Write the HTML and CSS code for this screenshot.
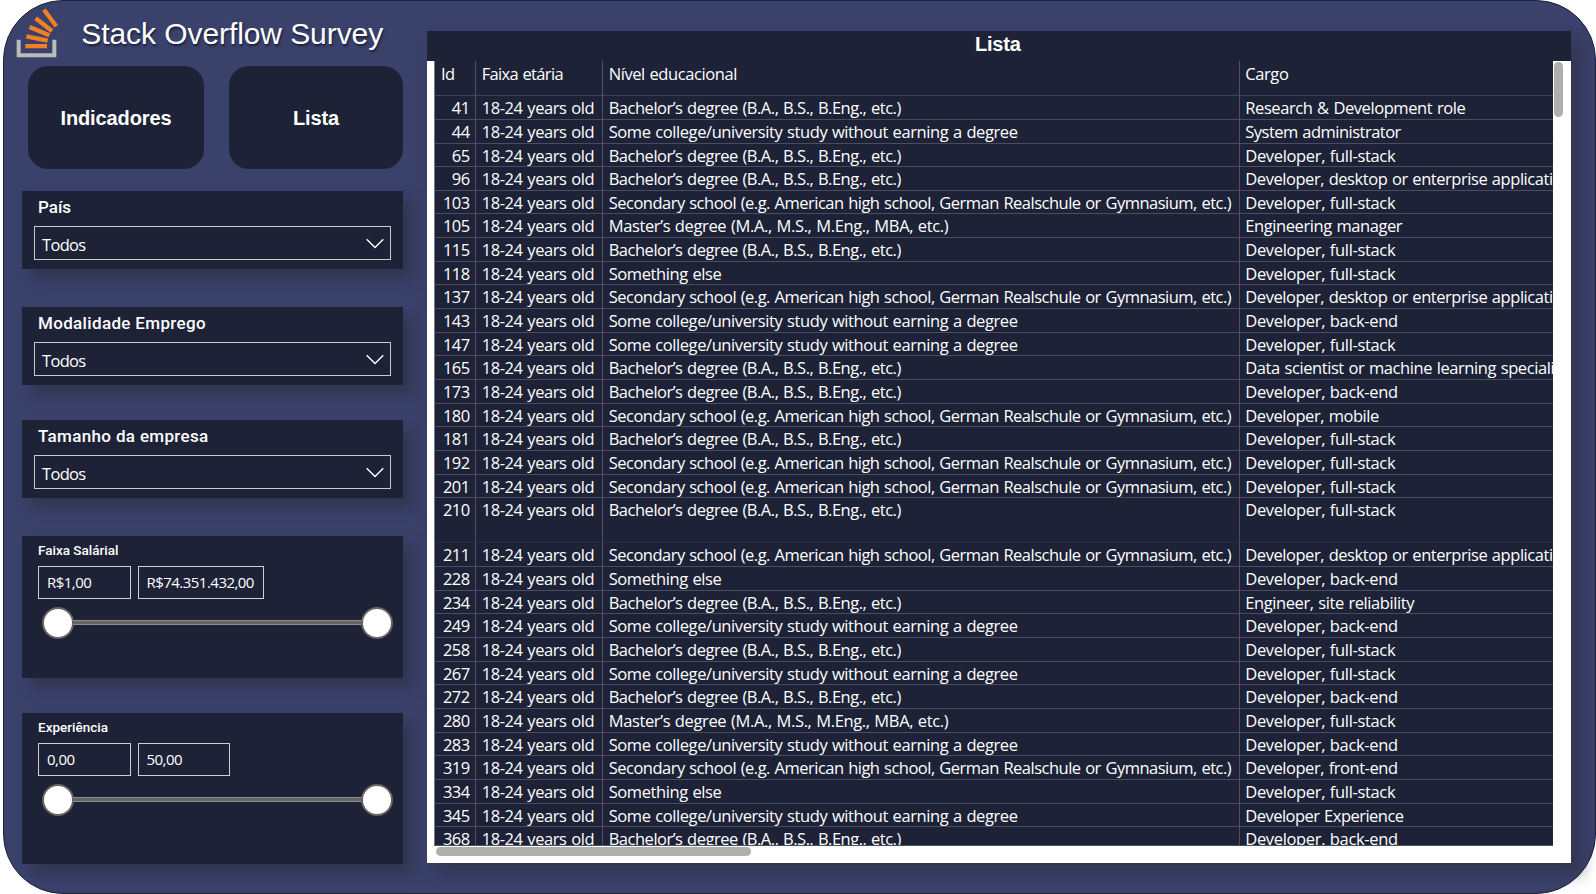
FILE: index.html
```html
<!DOCTYPE html>
<html lang="pt">
<head>
<meta charset="utf-8">
<title>Stack Overflow Survey</title>
<link rel="stylesheet" href="styles.css">
</head>
<body>
<div class="shell">
  <aside class="side">
    <header class="brand">
      <svg class="logo" viewBox="0 0 130 150" width="43.33" height="50" fill="none" stroke-width="12">
        <path stroke="#bcbbbb" d="M11 95v47h107V95"/>
        <path stroke="#f48024" stroke-width="13" d="M31 114.500h65M34 85l64 13M44 57l59 25M62 31l49 38M87 5l37 50"/>
      </svg>
      <h1>Stack Overflow Survey</h1>
    </header>
    <nav class="nav"><button class="tab first">Indicadores</button><button class="tab">Lista</button></nav>

    <section class="card pick a"><h2>País</h2><div class="select"><span>Todos</span><svg width="18" height="11" viewBox="0 0 18 11"><path d="M.7 1.200l8.300 8.300 8.300-8.300"/></svg></div></section>
    <section class="card pick b"><h2>Modalidade Emprego</h2><div class="select"><span>Todos</span><svg width="18" height="11" viewBox="0 0 18 11"><path d="M.7 1.200l8.300 8.300 8.300-8.300"/></svg></div></section>
    <section class="card pick c"><h2>Tamanho da empresa</h2><div class="select"><span>Todos</span><svg width="18" height="11" viewBox="0 0 18 11"><path d="M.7 1.200l8.300 8.300 8.300-8.300"/></svg></div></section>

    <section class="card range d"><h3>Faixa Salárial</h3>
      <div class="inputs"><div class="num">R$1,00</div><div class="num wide">R$74.351.432,00</div></div>
      <div class="slider"><i class="thumb"></i><i class="track"></i><i class="thumb"></i></div>
    </section>
    <section class="card range e"><h3>Experiência</h3>
      <div class="inputs"><div class="num">0,00</div><div class="num">50,00</div></div>
      <div class="slider"><i class="thumb"></i><i class="track"></i><i class="thumb"></i></div>
    </section>
  </aside>

  <main class="list">
    <h2 class="list-title">Lista</h2>
    <div class="list-body">
      <div class="table-col">
        <div class="table">
          <div class="row head"><b>Id</b><b class="fx">Faixa etária</b><b>Nível educacional</b><b>Cargo</b></div>
          <div class="row"><b>41</b><b>18-24 years old</b><b class="ba">Bachelor’s degree (B.A., B.S., B.Eng., etc.)</b><b>Research &amp; Development role</b></div>
          <div class="row"><b>44</b><b>18-24 years old</b><b class="so">Some college/university study without earning a degree</b><b class="sy">System administrator</b></div>
          <div class="row"><b>65</b><b>18-24 years old</b><b class="ba">Bachelor’s degree (B.A., B.S., B.Eng., etc.)</b><b class="dv">Developer, full-stack</b></div>
          <div class="row"><b>96</b><b>18-24 years old</b><b class="ba">Bachelor’s degree (B.A., B.S., B.Eng., etc.)</b><b class="dd">Developer, desktop or enterprise applications</b></div>
          <div class="row"><b>103</b><b>18-24 years old</b><b class="se">Secondary school (e.g. American high school, German Realschule or Gymnasium, etc.)</b><b class="dv">Developer, full-stack</b></div>
          <div class="row"><b>105</b><b>18-24 years old</b><b class="ma">Master’s degree (M.A., M.S., M.Eng., MBA, etc.)</b><b>Engineering manager</b></div>
          <div class="row"><b>115</b><b>18-24 years old</b><b class="ba">Bachelor’s degree (B.A., B.S., B.Eng., etc.)</b><b class="dv">Developer, full-stack</b></div>
          <div class="row"><b>118</b><b>18-24 years old</b><b class="so">Something else</b><b class="dv">Developer, full-stack</b></div>
          <div class="row"><b>137</b><b>18-24 years old</b><b class="se">Secondary school (e.g. American high school, German Realschule or Gymnasium, etc.)</b><b class="dd">Developer, desktop or enterprise applications</b></div>
          <div class="row"><b>143</b><b>18-24 years old</b><b class="so">Some college/university study without earning a degree</b><b class="dv">Developer, back-end</b></div>
          <div class="row"><b>147</b><b>18-24 years old</b><b class="so">Some college/university study without earning a degree</b><b class="dv">Developer, full-stack</b></div>
          <div class="row"><b>165</b><b>18-24 years old</b><b class="ba">Bachelor’s degree (B.A., B.S., B.Eng., etc.)</b><b>Data scientist or machine learning specialist</b></div>
          <div class="row"><b>173</b><b>18-24 years old</b><b class="ba">Bachelor’s degree (B.A., B.S., B.Eng., etc.)</b><b class="dv">Developer, back-end</b></div>
          <div class="row"><b>180</b><b>18-24 years old</b><b class="se">Secondary school (e.g. American high school, German Realschule or Gymnasium, etc.)</b><b class="dd">Developer, mobile</b></div>
          <div class="row"><b>181</b><b>18-24 years old</b><b class="ba">Bachelor’s degree (B.A., B.S., B.Eng., etc.)</b><b class="dv">Developer, full-stack</b></div>
          <div class="row"><b>192</b><b>18-24 years old</b><b class="se">Secondary school (e.g. American high school, German Realschule or Gymnasium, etc.)</b><b class="dv">Developer, full-stack</b></div>
          <div class="row"><b>201</b><b>18-24 years old</b><b class="se">Secondary school (e.g. American high school, German Realschule or Gymnasium, etc.)</b><b class="dv">Developer, full-stack</b></div>
          <div class="row tall"><b>210</b><b>18-24 years old</b><b class="ba">Bachelor’s degree (B.A., B.S., B.Eng., etc.)</b><b class="dv">Developer, full-stack</b></div>
          <div class="row"><b>211</b><b>18-24 years old</b><b class="se">Secondary school (e.g. American high school, German Realschule or Gymnasium, etc.)</b><b class="dd">Developer, desktop or enterprise applications</b></div>
          <div class="row"><b>228</b><b>18-24 years old</b><b class="so">Something else</b><b class="dv">Developer, back-end</b></div>
          <div class="row"><b>234</b><b>18-24 years old</b><b class="ba">Bachelor’s degree (B.A., B.S., B.Eng., etc.)</b><b>Engineer, site reliability</b></div>
          <div class="row"><b>249</b><b>18-24 years old</b><b class="so">Some college/university study without earning a degree</b><b class="dv">Developer, back-end</b></div>
          <div class="row"><b>258</b><b>18-24 years old</b><b class="ba">Bachelor’s degree (B.A., B.S., B.Eng., etc.)</b><b class="dv">Developer, full-stack</b></div>
          <div class="row"><b>267</b><b>18-24 years old</b><b class="so">Some college/university study without earning a degree</b><b class="dv">Developer, full-stack</b></div>
          <div class="row"><b>272</b><b>18-24 years old</b><b class="ba">Bachelor’s degree (B.A., B.S., B.Eng., etc.)</b><b class="dv">Developer, back-end</b></div>
          <div class="row"><b>280</b><b>18-24 years old</b><b class="ma">Master’s degree (M.A., M.S., M.Eng., MBA, etc.)</b><b class="dv">Developer, full-stack</b></div>
          <div class="row"><b>283</b><b>18-24 years old</b><b class="so">Some college/university study without earning a degree</b><b class="dv">Developer, back-end</b></div>
          <div class="row"><b>319</b><b>18-24 years old</b><b class="se">Secondary school (e.g. American high school, German Realschule or Gymnasium, etc.)</b><b class="dd">Developer, front-end</b></div>
          <div class="row"><b>334</b><b>18-24 years old</b><b class="so">Something else</b><b class="dv">Developer, full-stack</b></div>
          <div class="row"><b>345</b><b>18-24 years old</b><b class="so">Some college/university study without earning a degree</b><b class="sy">Developer Experience</b></div>
          <div class="row"><b>368</b><b>18-24 years old</b><b class="ba">Bachelor’s degree (B.A., B.S., B.Eng., etc.)</b><b class="dv">Developer, back-end</b></div>
        </div>
        <div class="hbar"></div>
      </div>
      <div class="vbar"></div>
    </div>
  </main>
</div>
</body>
</html>
```
FILE: styles.css
```css
* { box-sizing: border-box; }
body { margin: 0; background: #fff; width: 1596px; height: 894px; overflow: hidden; font-family: "Open Sans", sans-serif; color: #fff; }
h1, h2, h3 { margin: 0; font-weight: 400; }
.shell {
  display: flex; width: 1593px; height: 894px; margin-left: 3px;
  background: #3a416b; border: 1px solid #1e2237; border-radius: 60px;
}

/* Sidebar */
.side { width: 423px; padding: 7px 0 0 12px; flex: none; }
.brand { display: flex; height: 58px; }
.logo { flex: none; margin: -.5px 1px 0 -1px; }
.brand h1 {
  margin: 8px 0 0 22px; font: 30px/36px "Liberation Sans", Arial, sans-serif;
  letter-spacing: -.08px; text-shadow: 1px 2px 2px rgba(15, 18, 40, .7); white-space: nowrap;
}
.nav { display: flex; gap: 25px; margin-left: 12px; }
.tab {
  width: 174px; height: 103px; padding: 2px 0 0; border: 0; border-radius: 20px; background: #1e2237; color: #fff;
  font: bold 20px "Liberation Sans", Arial, sans-serif; letter-spacing: -.1px;
}
.tab.first { width: 176px; }

.card {
  width: 381px; margin-left: 6px; background: #1e2237;
  box-shadow: 10px 10px 12px rgba(47, 51, 72, .75);
}
.pick { height: 78px; padding: 6px 12px 0; margin-bottom: 38px; }
.pick.a { margin-top: 22px; }
.pick.b { margin-bottom: 35px; }
.pick h2 { padding-left: 4px; font: 500 17px/20px Roboto, sans-serif; letter-spacing: .34px; }
.pick.a h2 { letter-spacing: 0; }
.select {
  display: flex; align-items: center; justify-content: space-between; height: 34px; margin-top: 9px;
  padding: 3px 6px 0 7px; border: 1px solid #c9cad0; font-size: 16.5px; letter-spacing: -.68px;
}
.select svg { margin-top: -3px; fill: none; stroke: #fff; stroke-width: 1.4; }

.range { padding: 6px 11px 0 16px; }
.range.d { height: 142px; }
.range.e { height: 151px; margin-top: 35px; }
.range h3 { font: 500 13.5px/17px Roboto, sans-serif; }
.inputs { display: flex; gap: 7px; margin-top: 7px; }
.num {
  width: 92.5px; height: 33px; padding-left: 8px; border: 1px solid #d0d1d6;
  font-size: 15px; line-height: 30px; letter-spacing: -.53px; white-space: nowrap;
}
.num.wide { width: 126px; }
.slider { display: flex; align-items: center; margin: 8px -1px 0 4px; }
.thumb { width: 32px; height: 32px; border: 2px solid #666463; border-radius: 50%; background: #fff; flex: none; }
.track { flex: 1; height: 5px; margin: -1px -1px 0; background: #666463; border: solid #8b8b90; border-width: 1px 0; }

/* List */
.list {
  width: 1143.5px; height: 832px; margin-top: 30px; background: #fff;
  box-shadow: 10px 10px 14px rgba(47, 51, 72, .75);
}
.list-title {
  height: 30px; padding: 1px 2px 0 0; background: #1e2237; text-align: center;
  font: bold 20px/25px "Liberation Sans", Arial, sans-serif; letter-spacing: -.2px;
}
.list-body { display: flex; padding-left: 7px; }
.table-col { width: 1119px; }
.table { height: 785px; overflow: hidden; background: #1e2237; border-left: 1px solid #74788a; border-bottom: 1px solid #4c5064; }
.row { display: grid; grid-template-columns: 41px 127px 637px 313px; height: 23.67px; }
.row b {
  padding-left: 5.7px; border-right: 1px solid #4f5265; border-bottom: 1px solid #494d60;
  font-weight: 400; font-size: 16.5px; line-height: 24px; letter-spacing: -.42px; word-spacing: .8px;
  white-space: nowrap; overflow: hidden;
}
.row b:first-child { padding: 0 5.500px 0 0; text-align: right; letter-spacing: -.6px; }
.row b:last-child { padding-left: 5.3px; border-right: 0; }
.row .ba { letter-spacing: -.48px; }
.row .se { letter-spacing: -.505px; }
.row .so { letter-spacing: -.41px; }
.row .ma { letter-spacing: -.37px; }
.row .dv { letter-spacing: -.34px; }
.row .dd { letter-spacing: -.45px; }
.row .sy { letter-spacing: -.52px; }
.row.tall { height: 45px; }
.row.tall b { border-bottom-color: #2a2e42; }
.row.head { height: 35.2px; }
.row.head b { line-height: 26px; border-bottom-color: #3a416b; }
.row.head b:first-child { padding-left: 6px; text-align: left; }
.row.head .fx { letter-spacing: -.66px; }
.hbar { width: 315px; height: 9px; margin: 1px 0 0 2px; border-radius: 5px; background: #b0afae; }
.vbar { width: 9px; height: 55px; margin: 1px 0 0 1px; border-radius: 5px; background: #b0afae; }
```
